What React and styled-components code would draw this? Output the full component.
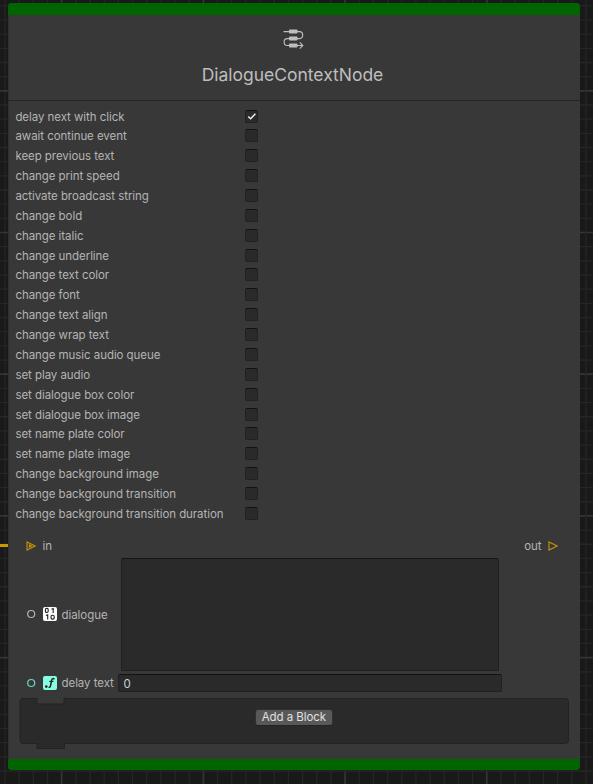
import React from 'react';
import styled, { createGlobalStyle } from 'styled-components';

const GlobalStyle = createGlobalStyle`
  * { box-sizing: border-box; }
  body { margin: 0; background: #191919; }
`;

const Canvas = styled.main`
  position: relative;
  width: 593px;
  height: 784px;
  overflow: hidden;
  padding: 3px 13px 14px 8px;
  font-family: Inter, sans-serif;
  font-size: 11.5px;
  letter-spacing: -0.06px;
  color: #b4b4b4;
  background: #191919;
`;

const GridLines = styled.svg`
  position: absolute;
  inset: 0;
`;

const Node = styled.section`
  position: relative;
  height: 767px;
  width: 572px;
  display: flex;
  flex-direction: column;
  border-radius: 4px;
  overflow: hidden;
  background: #383838;
  box-shadow: inset 1px 0 #303030;
`;

const Accent = styled.div`
  flex: none;
  height: ${(p) => p.$height}px;
  background: #006400;
`;

const Header = styled.header`
  flex: none;
  height: 86px;
  display: flex;
  flex-direction: column;
  align-items: center;
  padding-top: 13.4px;
  padding-right: 2px;
  border-bottom: 1px solid #252525;
`;

const Title = styled.h1`
  margin: 15.6px 1px 0 0;
  font-size: 17.5px;
  font-weight: 400;
  line-height: 22px;
  letter-spacing: -0.02px;
  color: #bebebe;
`;

const Options = styled.div`
  flex: none;
  height: 431px;
  padding: 5.7px 7px 0 7.4px;
`;

const Option = styled.label`
  display: grid;
  grid-template-columns: 229.6px 14px;
  align-items: center;
  height: 19.87px;
  white-space: nowrap;
`;

const OptionName = styled.span`
  padding-top: 1px;
`;

const Check = styled.span`
  display: block;
  width: 13.4px;
  height: 13px;
  border: 1px solid #222;
  border-top-color: #121212;
  border-radius: 2px;
  background: #2a2a2a;
  svg { display: block; }
`;

const FlowPorts = styled.div`
  flex: none;
  height: 26px;
  display: flex;
  align-items: center;
  justify-content: space-between;
  padding: 2px 22px 0 18px;
`;

const Port = styled.div`
  display: flex;
  align-items: center;
  gap: 6.5px;
`;

const DataPort = styled.div`
  flex: none;
  display: flex;
  align-items: center;
  height: ${(p) => p.$height}px;
  padding-left: 18px;
`;

const Ring = styled.svg`
  width: 10px;
  height: 10px;
  margin-right: 7px;
`;

const PortName = styled.span`
  width: ${(p) => p.$width}px;
  margin-left: 4.5px;
  padding-top: 1px;
  white-space: nowrap;
`;

const TextArea = styled.div`
  width: 378px;
  height: 113px;
  border: 1px solid #202020;
  border-top-color: #151515;
  border-radius: 2px;
  background: #2a2a2a;
`;

const NumberField = styled.div`
  width: 384px;
  height: 18px;
  padding-left: 5px;
  border: 1px solid #202020;
  border-top-color: #121212;
  border-radius: 2px;
  background: #2a2a2a;
  line-height: 18px;
  color: #d0d0d0;
`;

const BlockArea = styled.div`
  position: relative;
  flex: none;
  width: 550px;
  height: 52px;
  margin: 3px 0 9.5px 11.4px;
  display: flex;
  justify-content: center;
  align-items: flex-start;
  padding-top: 11px;
`;

const BlockShape = styled.svg`
  position: absolute;
  left: 0;
  top: 0;
`;

const AddButton = styled.button`
  position: relative;
  width: 78px;
  height: 17px;
  margin-right: 1px;
  padding: 0;
  border: 1px solid #303030;
  border-bottom-color: #242424;
  border-radius: 3px;
  background: #585858;
  font: 11.5px/14px Inter, sans-serif;
  letter-spacing: -0.06px;
  color: #e0e0e0;
`;

const Edge = styled.div`
  position: absolute;
  left: 0;
  top: 543.7px;
  width: 8px;
  height: 3.5px;
  background: #c99700;
`;

const options = [
  'delay next with click', 'await continue event', 'keep previous text',
  'change print speed', 'activate broadcast string', 'change bold',
  'change italic', 'change underline', 'change text color', 'change font',
  'change text align', 'change wrap text', 'change music audio queue',
  'set play audio', 'set dialogue box color', 'set dialogue box image',
  'set name plate color', 'set name plate image', 'change background image',
  'change background transition', 'change background transition duration',
];

const STEP = 14.17;
const lineIndexes = Array.from({ length: 56 }, (_, i) => i);

function Grid() {
  return (
    <GridLines width="593" height="784">
      {lineIndexes.map((i) => {
        const x = 5 + i * STEP;
        const y = 5.8 + i * STEP;
        const majorX = i % 10 === 4;
        const majorY = i % 10 === 6;
        return (
          <g key={i}>
            <line x1={x} x2={x} y1="0" y2="784" stroke={majorX ? '#353535' : '#262626'} strokeWidth={majorX ? 1.7 : 1.3} />
            <line x1="0" x2="593" y1={y} y2={y} stroke={majorY ? '#353535' : '#262626'} strokeWidth={majorY ? 1.7 : 1.3} />
          </g>
        );
      })}
    </GridLines>
  );
}

function FlowIcon() {
  return (
    <svg width="21" height="21" viewBox="0 0 21 21" fill="none" stroke="#bebebe">
      <path d="M0.5 3.6H16.5Q19.7 3.6 19.7 7.1T16.5 10.6H4.3Q1.1 10.6 1.1 14T4.3 17.5H19.3" strokeWidth="1.1" />
      <path d="M16.8 14.4L19.8 17.5L16.8 20.6" strokeWidth="1.1" />
      <g fill="#bebebe" stroke="none">
        <rect x="6" y="1.6" width="8.5" height="4" rx="1" />
        <rect x="6" y="8.6" width="8.5" height="4" rx="1" />
        <rect x="6" y="15.5" width="8.5" height="4" rx="1" />
      </g>
    </svg>
  );
}

function Arrow({ connected }) {
  return (
    <svg width="10" height="10" viewBox="0 0 10 10" fill="none" stroke="#c4930b" strokeWidth="1.1">
      <path d="M1 0.9L9.2 5L1 9.1Z" />
      {connected && <path d="M2.8 3.1V6.9L6.6 5Z" fill="#c4930b" stroke="none" />}
    </svg>
  );
}

function PortRing({ color }) {
  return (
    <Ring viewBox="0 0 10 10">
      <circle cx="5.2" cy="5" r="3.5" fill="none" stroke={color} strokeWidth="1.2" />
    </Ring>
  );
}

function StringIcon() {
  return (
    <svg width="14" height="14" viewBox="0 0 14 14">
      <rect width="14" height="14" rx="2" fill="#fff" />
      <g fill="none" stroke="#222" strokeWidth="1.1">
        <rect x="2.4" y="1.4" width="2.8" height="4" rx="1.2" />
        <path d="M8.5 2.3L10.2 1.5V6" />
        <path d="M3 8.6L4.7 7.8V12.4" />
        <rect x="8" y="8.2" width="3.2" height="3.9" rx="1.3" />
      </g>
    </svg>
  );
}

function FloatIcon() {
  return (
    <svg width="14" height="14" viewBox="0 0 14 14">
      <rect width="14" height="14" rx="2" fill="#84ffe3" />
      <circle cx="3.3" cy="10.6" r="1.3" fill="#222" />
      <path d="M11.4 3.4C10.3 2 9 2.5 8.6 4.2L7.7 9.2C7.4 10.9 6.7 11.6 5.6 11.2" fill="none" stroke="#222" strokeWidth="1.5" />
      <path d="M6.3 5.4H10.5" stroke="#222" strokeWidth="1.1" />
    </svg>
  );
}

export default function App() {
  return (
    <>
      <GlobalStyle />
      <Canvas>
        <Grid />
        <Edge />
        <Node>
          <Accent $height={11.5} />
          <Header>
            <FlowIcon />
            <Title>DialogueContextNode</Title>
          </Header>
          <Options>
            {options.map((name, i) => (
              <Option key={name}>
                <OptionName>{name}</OptionName>
                <Check>
                  {i === 0 && (
                    <svg width="11" height="11" viewBox="0 0 11 11">
                      <path d="M2.2 5.5L4.6 7.8L9.4 2.8" fill="none" stroke="#eee" strokeWidth="1.5" />
                    </svg>
                  )}
                </Check>
              </Option>
            ))}
          </Options>
          <FlowPorts>
            <Port><Arrow connected /><span>in</span></Port>
            <Port><span>out</span><Arrow /></Port>
          </FlowPorts>
          <DataPort $height={113}>
            <PortRing color="#b4b4b4" />
            <StringIcon />
            <PortName $width={59}>dialogue</PortName>
            <TextArea />
          </DataPort>
          <DataPort $height={24}>
            <PortRing color="#69d8bf" />
            <FloatIcon />
            <PortName $width={56}>delay text</PortName>
            <NumberField>0</NumberField>
          </DataPort>
          <BlockArea>
            <BlockShape width="550" height="52" viewBox="0 0 550 52">
              <path
                d="M4 .5H18V6H45V.5H546.5Q549.5 .5 549.5 3.5V42.5Q549.5 45.5 546.5 45.5H45.5V50.5H18V45.5H4Q1 45.5 1 42.5V3.5Q1 .5 4 .5Z"
                fill="#2a2a2a"
                stroke="#232323"
              />
            </BlockShape>
            <AddButton>Add a Block</AddButton>
          </BlockArea>
          <Accent $height={11} />
        </Node>
      </Canvas>
    </>
  );
}
